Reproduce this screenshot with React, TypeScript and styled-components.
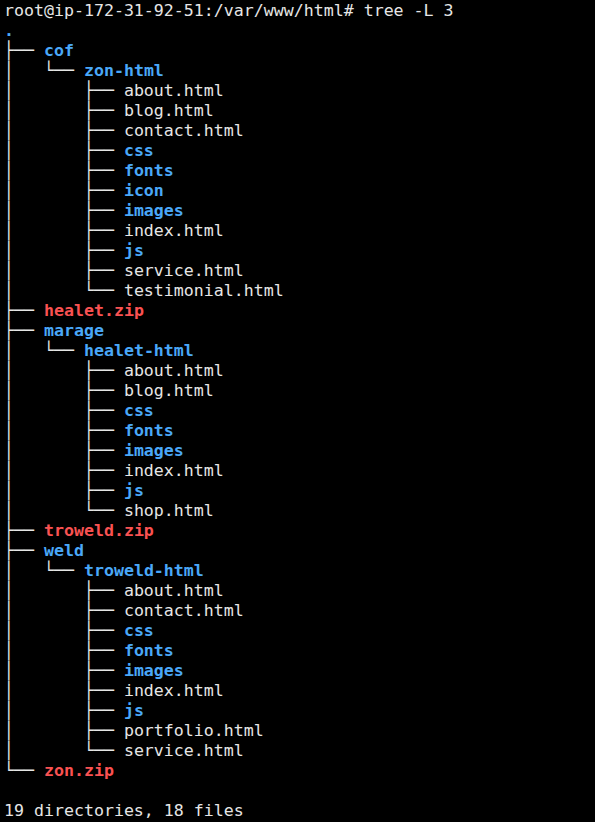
import React from "react";
import styled, { createGlobalStyle } from "styled-components";

const Global = createGlobalStyle`
  html, body { margin: 0; padding: 0; background: #000; }
  body { width: 595px; height: 822px; overflow: hidden; }
`;

const Terminal = styled.div`
  box-sizing: border-box;
  width: 595px;
  height: 822px;
  padding: 1px 0 0 4px;
  background: #000;
  color: #e6e6e6;
  font-family: "DejaVu Sans Mono", "Liberation Mono", monospace;
  font-size: 16.6px;
  line-height: 20px;
  display: flex;
  flex-direction: column;
`;

const Line = styled.div`
  height: 20px;
  white-space: pre;
`;

const Branch = styled.span`
  color: #e6e6e6;
`;

type Kind = "file" | "dir" | "zip";

const Name = styled.span<{ $kind: Kind }>`
  font-weight: ${(p) => (p.$kind === "file" ? "normal" : "bold")};
  color: ${(p) =>
    p.$kind === "dir" ? "#4aa8f8" : p.$kind === "zip" ? "#f95252" : "#e6e6e6"};
`;

type Entry = [string, string, Kind];

const entries: Entry[] = [
  ["", ".", "dir"],
  ["├── ", "cof", "dir"],
  ["│   └── ", "zon-html", "dir"],
  ["│       ├── ", "about.html", "file"],
  ["│       ├── ", "blog.html", "file"],
  ["│       ├── ", "contact.html", "file"],
  ["│       ├── ", "css", "dir"],
  ["│       ├── ", "fonts", "dir"],
  ["│       ├── ", "icon", "dir"],
  ["│       ├── ", "images", "dir"],
  ["│       ├── ", "index.html", "file"],
  ["│       ├── ", "js", "dir"],
  ["│       ├── ", "service.html", "file"],
  ["│       └── ", "testimonial.html", "file"],
  ["├── ", "healet.zip", "zip"],
  ["├── ", "marage", "dir"],
  ["│   └── ", "healet-html", "dir"],
  ["│       ├── ", "about.html", "file"],
  ["│       ├── ", "blog.html", "file"],
  ["│       ├── ", "css", "dir"],
  ["│       ├── ", "fonts", "dir"],
  ["│       ├── ", "images", "dir"],
  ["│       ├── ", "index.html", "file"],
  ["│       ├── ", "js", "dir"],
  ["│       └── ", "shop.html", "file"],
  ["├── ", "troweld.zip", "zip"],
  ["├── ", "weld", "dir"],
  ["│   └── ", "troweld-html", "dir"],
  ["│       ├── ", "about.html", "file"],
  ["│       ├── ", "contact.html", "file"],
  ["│       ├── ", "css", "dir"],
  ["│       ├── ", "fonts", "dir"],
  ["│       ├── ", "images", "dir"],
  ["│       ├── ", "index.html", "file"],
  ["│       ├── ", "js", "dir"],
  ["│       ├── ", "portfolio.html", "file"],
  ["│       └── ", "service.html", "file"],
  ["└── ", "zon.zip", "zip"],
];

export default function App() {
  return (
    <>
      <Global />
      <Terminal>
        <Line>root@ip-172-31-92-51:/var/www/html# tree -L 3</Line>
        {entries.map(([prefix, name, kind], i) => (
          <Line key={i}>
            <Branch>{prefix}</Branch>
            <Name $kind={kind}>{name}</Name>
          </Line>
        ))}
        <Line> </Line>
        <Line>19 directories, 18 files</Line>
      </Terminal>
    </>
  );
}
